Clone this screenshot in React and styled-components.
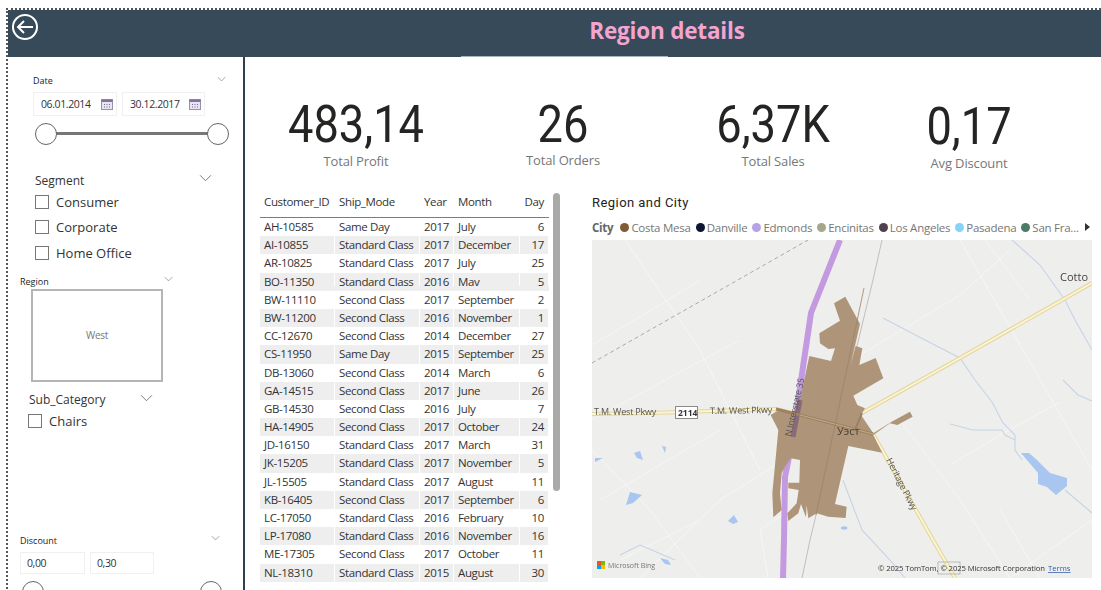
import React from "react";
import styled, { createGlobalStyle } from "styled-components";

const UI = '"Open Sans", "Noto Sans", sans-serif';
const DIN = 'Roboto, "Liberation Sans", sans-serif';

const Global = createGlobalStyle`
  html, body { margin: 0; padding: 0; background: #fff; height: 590px; overflow: hidden; }
  #root { height: 590px; }
`;

const Frame = styled.div`
  margin: 8px 0 0 6px;
  height: 582px;
  border-top: 2px dotted #555;
  border-left: 2px dotted #555;
  display: flex;
  flex-direction: column;
  font-family: ${UI};
  overflow: hidden;
`;
const Header = styled.header`
  position: relative;
  flex: 0 0 47px;
  background: #364a59;
  display: flex;
  align-items: center;
  justify-content: center;
  &::after {
    content: "";
    position: absolute;
    left: 453px;
    bottom: 0;
    width: 207px;
    height: 1px;
    background: #a9b3ba;
  }
`;
const BackIcon = styled.svg`
  position: absolute;
  left: 3px;
  top: 3px;
  width: 28px;
  height: 28px;
`;
const Title = styled.h1`
  margin: 0 0 4px 225px;
  font: 700 22.5px/1 ${UI};
  letter-spacing: -0.2px;
  color: #f3a5cf;
`;
const Body = styled.div`
  flex: 1;
  display: flex;
  min-height: 0;
`;
const Sidebar = styled.aside`
  flex: 0 0 237px;
  height: 100%;
  box-sizing: border-box;
  border-right: 2px solid #2f4050;
  display: flex;
  flex-direction: column;
`;
const Slicer = styled.section`
  margin-top: ${(p) => p.$top}px;
  margin-left: ${(p) => p.$left}px;
  width: ${(p) => p.$width}px;
  flex: none;
`;
const SlicerHead = styled.div`
  display: flex;
  align-items: center;
  justify-content: space-between;
  height: ${(p) => (p.$big ? 18 : 13)}px;
  font-size: ${(p) => (p.$big ? 12 : 9)}px;
  color: ${(p) => (p.$big ? "#333" : "#222")};
`;
const Chevron = styled.svg`
  width: ${(p) => (p.$big ? 13 : 9)}px;
  height: ${(p) => (p.$big ? 8 : 6)}px;
  margin-top: -4px;
  flex: none;
`;
const Inputs = styled.div`
  display: flex;
  gap: 5px;
  margin-top: ${(p) => p.$top}px;
`;
const DateInput = styled.div`
  box-sizing: border-box;
  width: ${(p) => p.$width}px;
  height: ${(p) => p.$height}px;
  border: 1px solid #f0f0f0;
  padding: 0 3px 0 ${(p) => p.$pad}px;
  display: flex;
  align-items: center;
  justify-content: space-between;
  font-size: 10.5px;
  letter-spacing: -0.4px;
  color: #333;
`;
const Slider = styled.div`
  position: relative;
  height: 22px;
  margin-top: ${(p) => p.$top}px;
  margin-left: ${(p) => p.$left}px;
  width: ${(p) => p.$width}px;
  flex: none;
  &::before {
    content: "";
    position: absolute;
    left: 10px;
    right: 10px;
    top: 9px;
    height: 3px;
    background: #777;
  }
`;
const Thumb = styled.span`
  position: absolute;
  top: 0;
  ${(p) => p.$side}: 0;
  box-sizing: border-box;
  width: 22px;
  height: 22px;
  border-radius: 50%;
  border: 1.5px solid #666;
  background: #fff;
`;
const CheckRow = styled.label`
  display: flex;
  align-items: center;
  gap: 7px;
  height: ${(p) => p.$height || 25.5}px;
  margin-left: ${(p) => p.$indent || 0}px;
  font-size: 13px;
  color: #333;
`;
const CheckBox = styled.span`
  box-sizing: border-box;
  width: 14px;
  height: 14px;
  border: 1px solid #777;
  flex: none;
`;
const RegionBox = styled.div`
  box-sizing: border-box;
  margin: 1px 0 0 11px;
  width: 132px;
  height: 93px;
  border: 2px solid #b5b5b5;
  display: flex;
  align-items: center;
  justify-content: center;
  font-size: 10px;
  letter-spacing: -0.3px;
  color: #777;
`;
const Main = styled.main`
  flex: 1;
  min-width: 0;
  display: flex;
  flex-direction: column;
`;
const KpiRow = styled.div`
  flex: 0 0 136px;
  display: grid;
  grid-template-columns: 208px 206px 214px 178px;
  padding-left: 7px;
`;
const Kpi = styled.div`
  padding-top: ${(p) => p.$top}px;
  text-align: center;
`;
const KpiValue = styled.div`
  font: 400 52px/50px ${DIN};
  color: #252423;
  transform: scaleX(0.87);
`;
const KpiLabel = styled.div`
  margin-top: ${(p) => p.$gap}px;
  font-size: 13px;
  line-height: 18px;
  letter-spacing: -0.15px;
  color: #777;
`;
const Content = styled.div`
  flex: 1;
  display: flex;
  min-height: 0;
`;
const TableWrap = styled.div`
  margin-left: 15px;
  width: 289px;
  flex: none;
`;
const columns = "75px 85px 34px 66px 29px";
const HeadRow = styled.div`
  display: grid;
  grid-template-columns: ${columns};
  height: 18px;
  padding-bottom: 6px;
  align-items: end;
  border-bottom: 1px solid #c4548f;
  font-size: 11.5px;
  letter-spacing: -0.36px;
  line-height: 18px;
  color: #333;
`;
const Row = styled.div`
  display: grid;
  grid-template-columns: ${columns};
  height: 18.2px;
  overflow: hidden;
  background: ${(p) => (p.$striped ? "#eeeeee" : "#fff")};
  font-size: 11.5px;
  letter-spacing: -0.36px;
  line-height: 18.2px;
  color: #333;
`;
const Cell = styled.div`
  padding: 0 ${(p) => (p.$right ? 5 : 4)}px 0 4px;
  white-space: nowrap;
  text-align: ${(p) => (p.$right ? "right" : "left")};
  box-shadow: inset -1px 0 0 #fff;
  ${(p) => p.$clip && "height: 13px; overflow: hidden;"}
`;
const Scrollbar = styled.div`
  margin-left: 4px;
  width: 7px;
  height: 298px;
  border-radius: 3.5px;
  background: #a9a9a9;
  flex: none;
`;
const MapPanel = styled.div`
  margin-left: 32px;
  width: 500px;
  flex: none;
`;
const MapTitle = styled.h2`
  margin: 0;
  height: 19px;
  font: 400 13px/19px ${DIN};
  letter-spacing: 0.45px;
  color: #222;
`;
const Legend = styled.div`
  position: relative;
  height: 19px;
  margin-top: 6px;
  display: flex;
  align-items: center;
  font-size: 11.5px;
  letter-spacing: -0.25px;
  color: #777;
`;
const LegendTitle = styled.strong`
  font-weight: 700;
  color: #666;
  margin-right: 7px;
`;
const LegendItem = styled.span`
  display: flex;
  align-items: center;
  gap: 2px;
  margin-right: 5px;
  white-space: nowrap;
`;
const Dot = styled.i`
  width: 9px;
  height: 9px;
  border-radius: 50%;
  background: ${(p) => p.$color};
  flex: none;
`;
const LegendArrow = styled.span`
  position: absolute;
  right: 2px;
  top: 5px;
  border-left: 5px solid #333;
  border-top: 4px solid transparent;
  border-bottom: 4px solid transparent;
`;
const MapArea = styled.svg`
  display: block;
  margin-top: 3px;
  width: 500px;
  height: 338px;
`;

const rows = [
  ["AH-10585", "Same Day", 2017, "July", 6],
  ["AI-10855", "Standard Class", 2017, "December", 17],
  ["AR-10825", "Standard Class", 2017, "July", 25],
  ["BO-11350", "Standard Class", 2016, "May", 5],
  ["BW-11110", "Second Class", 2017, "September", 2],
  ["BW-11200", "Second Class", 2016, "November", 1],
  ["CC-12670", "Second Class", 2014, "December", 27],
  ["CS-11950", "Same Day", 2015, "September", 25],
  ["DB-13060", "Second Class", 2014, "March", 6],
  ["GA-14515", "Second Class", 2017, "June", 26],
  ["GB-14530", "Second Class", 2016, "July", 7],
  ["HA-14905", "Second Class", 2017, "October", 24],
  ["JD-16150", "Standard Class", 2017, "March", 31],
  ["JK-15205", "Standard Class", 2017, "November", 5],
  ["JL-15505", "Standard Class", 2017, "August", 11],
  ["KB-16405", "Second Class", 2017, "September", 6],
  ["LC-17050", "Standard Class", 2016, "February", 10],
  ["LP-17080", "Standard Class", 2016, "November", 16],
  ["ME-17305", "Second Class", 2017, "October", 11],
  ["NL-18310", "Standard Class", 2015, "August", 30],
];

const legend = [
  ["Costa Mesa", "#7f5a34"],
  ["Danville", "#0c1433"],
  ["Edmonds", "#b8a2e6"],
  ["Encinitas", "#a6a68c"],
  ["Los Angeles", "#4d4150"],
  ["Pasadena", "#86d3f7"],
  ["San Fra...", "#4d7a68"],
];

const Down = ({ big }) => (
  <Chevron $big={big} viewBox="0 0 12 7">
    <polyline points="1,1 6,6 11,1" fill="none" stroke="#777" strokeWidth="0.9" />
  </Chevron>
);

const Calendar = () => (
  <svg width="12" height="11" viewBox="0 0 12 11">
    <rect x="0.5" y="0.5" width="11" height="10" fill="#e8e4f0" stroke="#9a8fb0" />
    <rect x="0.5" y="0.5" width="11" height="2.5" fill="#8a6f9c" />
    <path d="M3 5h1v1H3zM5.5 5h1v1h-1zM8 5h1v1H8zM3 7.5h1v1H3zM5.5 7.5h1v1h-1zM8 7.5h1v1H8z" fill="#6d6a98" />
  </svg>
);

const Road = ({ d }) => (
  <g fill="none" strokeLinejoin="round">
    <path d={d} stroke="#e2d59f" strokeWidth="4" />
    <path d={d} stroke="#fdf5d2" strokeWidth="2" />
  </g>
);

const town =
  "402,70 436,50 480,132 452,255 467,198 487,205 478,255 527,234 550,295 460,347 472,375 495,385 483,405 520,460 575,425 630,395 638,410 592,435 570,430 520,465 547,518 445,498 405,672 440,680 437,714 385,710 350,700 325,715 320,675 318,712 303,672 295,700 265,723 262,700 290,670 296,630 265,625 265,608 298,608 300,540 272,535 255,560 245,580 240,640 245,690 220,712 217,640 235,450 212,405 232,393 280,400 300,360 328,228 393,243 405,205 385,207 360,190 358,160 420,122";

const MapDrawing = () => (
  <MapArea viewBox="592 240 500 338">
    <defs>
      <filter id="soft" x="0" y="0" width="100%" height="100%">
        <feGaussianBlur stdDeviation="0.35" />
      </filter>
    </defs>
    <g filter="url(#soft)">
      <rect x="592" y="240" width="500" height="338" fill="#eeeeec" />
      <g fill="none" stroke="#f6f6f5" strokeWidth="1">
        <path d="M592 345L660 305L700 280M625 240L700 350L760 470M592 420L680 372L740 340M640 578L720 500L800 450" />
        <path d="M860 355L960 295L1010 250M960 240L1020 345L1092 470M950 465L1000 435L1060 402M1010 578L1092 520M1010 578L960 500L900 420" />
        <path d="M700 578L650 510L592 450M600 500L660 465L720 430M1000 510L1040 578M985 240L1030 300" />
        <path d="M768 578L760 530L790 510M620 560L700 520" />
      </g>
      <g fill="none" stroke="#c6d4e6" strokeWidth="1.1">
        <path d="M1012 240L1040 265L1065 300L1075 320L1092 350" />
        <path d="M883 318L925 340L960 358L975 380L992 402L1003 423L1015 435L1015 450L1022 460" />
        <path d="M950 424L973 430L1002 430L1005 435L1015 440" />
        <path d="M1065 490L1092 513M1063 380L1078 395L1092 401" />
        <path d="M843 480L862 530L890 560L905 578M620 555L640 545L675 560" />
      </g>
      <path d="M592 363L808 240" fill="none" stroke="#aaa" strokeWidth="1" strokeDasharray="4 3" />
      <path d="M882 240L873 280L810 540L802 578" fill="none" stroke="#c0bfbc" strokeWidth="1" />
      <g fill="#a9c6f0">
        <path d="M1021 453L1029 453L1037 460L1050 473L1067 478L1067 486L1056 495L1047 487L1038 484L1038 473Z" />
        <path d="M634 453L640 451L643 460L637 458Z" />
        <path d="M626 505L630 492L642 495L633 503Z" />
        <path d="M595 458L603 458L595 462Z" />
        <path d="M662 446L666 447L665 453Z" />
        <path d="M728 521L734 515L738 522L733 524Z" />
        <path d="M841 527l4-1 3 2-3 2-4-1z" />
        <path d="M660 558l8 2 3 5-6-1z" />
      </g>
      <Road d="M592 414L650 413L776 409L800 415" />
      <Road d="M862 413L960 358L1092 283" />
      <Road d="M873 434L933 540L955 578" />
      <path d="M840 240L811 313L803 367L793 437L785 477L784 540L783 578" fill="none" stroke="#c39ae0" strokeWidth="6" />
      <polygon points={town} fill="#ae9479" transform="translate(700 280) scale(0.3333)" />
      <path d="M800 400L793 437" fill="none" stroke="#8a6a78" strokeWidth="5" />
      <path d="M776 409L800 415L873 434" fill="none" stroke="#9c8262" strokeWidth="3" />
      <path d="M800 415L873 434" fill="none" stroke="#c2ad8a" strokeWidth="1" />
      <path d="M862 413L855 430" fill="none" stroke="#9c8262" strokeWidth="2" />
      <path d="M864 288L816 515" fill="none" stroke="#9c8468" strokeWidth="0.8" />
      <g fontFamily={UI} fill="#555">
        <text x="594" y="415" fontSize="9" letterSpacing="-0.2">T.M. West Pkwy</text>
        <text x="710" y="414" fontSize="9" letterSpacing="-0.2" transform="rotate(-1 710 414)">T.M. West Pkwy</text>
        <text x="0" y="0" fontSize="9" letterSpacing="-0.2" transform="translate(791 437) rotate(-77)">N Interstate 35</text>
        <text x="0" y="0" fontSize="9" letterSpacing="-0.2" transform="translate(886 460) rotate(63)">Heritage Pkwy</text>
        <text x="837" y="435" fontSize="11" fill="#4a4238">Уэст</text>
        <text x="1060" y="281" fontSize="11" fill="#444">Cotto</text>
      </g>
      <rect x="675.5" y="406.5" width="22" height="12" fill="#fff" stroke="#8a8a8a" strokeWidth="1" />
      <text x="678" y="415.5" fontFamily={UI} fontSize="8.5" fontWeight="700" fill="#333">2114</text>
      <rect x="597" y="561" width="4" height="4" fill="#f25022" />
      <rect x="601" y="561" width="4" height="4" fill="#7fba00" />
      <rect x="597" y="565" width="4" height="4" fill="#00a4ef" />
      <rect x="601" y="565" width="4" height="4" fill="#ffb900" />
      <text x="608" y="568" fontFamily={UI} fontSize="7" fill="#777">Microsoft Bing</text>
      <rect x="938" y="562" width="22" height="12" fill="none" stroke="#999" strokeWidth="0.6" />
      <text x="878" y="571" fontFamily={UI} fontSize="7.7" fill="#333" letterSpacing="-0.1">© 2025 TomTom, © 2025 Microsoft Corporation</text>
      <text x="1048" y="571" fontFamily={UI} fontSize="7.7" fill="#3560a8" textDecoration="underline">Terms</text>
    </g>
  </MapArea>
);

export default function App() {
  return (
    <>
      <Global />
      <Frame>
        <Header>
          <BackIcon viewBox="0 0 28 28">
            <circle cx="14" cy="14" r="12" fill="none" stroke="#fff" strokeWidth="2" />
            <path d="M22 14H7M13 8l-6 6 6 6" fill="none" stroke="#fff" strokeWidth="2" />
          </BackIcon>
          <Title>Region details</Title>
        </Header>
        <Body>
          <Sidebar>
            <Slicer $top={17} $left={25} $width={193}>
              <SlicerHead>Date<Down /></SlicerHead>
              <Inputs $top={5}>
                <DateInput $width={84} $height={24} $pad={7}>06.01.2014<Calendar /></DateInput>
                <DateInput $width={83} $height={24} $pad={7}>30.12.2017<Calendar /></DateInput>
              </Inputs>
            </Slicer>
            <Slider $top={7} $left={27} $width={194}>
              <Thumb $side="left" />
              <Thumb $side="right" />
            </Slider>
            <Slicer $top={26} $left={27} $width={177}>
              <SlicerHead $big>Segment<Down big /></SlicerHead>
              <CheckRow><CheckBox />Consumer</CheckRow>
              <CheckRow><CheckBox />Corporate</CheckRow>
              <CheckRow><CheckBox />Home Office</CheckRow>
            </Slicer>
            <Slicer $top={9} $left={12} $width={153}>
              <SlicerHead>Region<Down /></SlicerHead>
              <RegionBox>West</RegionBox>
            </Slicer>
            <Slicer $top={9} $left={21} $width={124}>
              <SlicerHead $big>Sub_Category<Down big /></SlicerHead>
              <CheckRow $height={24} $indent={-1}><CheckBox />Chairs</CheckRow>
            </Slicer>
            <Slicer $top={101} $left={12} $width={200}>
              <SlicerHead>Discount<Down /></SlicerHead>
              <Inputs $top={5}>
                <DateInput $width={65} $height={22} $pad={6}>0,00</DateInput>
                <DateInput $width={64} $height={22} $pad={6}>0,30</DateInput>
              </Inputs>
            </Slicer>
            <Slider $top={7} $left={14} $width={200}>
              <Thumb $side="left" />
              <Thumb $side="right" />
            </Slider>
          </Sidebar>
          <Main>
            <KpiRow>
              <Kpi $top={43}>
                <KpiValue>483,14</KpiValue>
                <KpiLabel $gap={2}>Total Profit</KpiLabel>
              </Kpi>
              <Kpi $top={43}>
                <KpiValue>26</KpiValue>
                <KpiLabel $gap={1}>Total Orders</KpiLabel>
              </Kpi>
              <Kpi $top={43}>
                <KpiValue>6,37K</KpiValue>
                <KpiLabel $gap={2}>Total Sales</KpiLabel>
              </Kpi>
              <Kpi $top={45}>
                <KpiValue>0,17</KpiValue>
                <KpiLabel $gap={2}>Avg Discount</KpiLabel>
              </Kpi>
            </KpiRow>
            <Content>
              <TableWrap>
                <HeadRow>
                  <Cell>Customer_ID</Cell>
                  <Cell>Ship_Mode</Cell>
                  <Cell>Year</Cell>
                  <Cell>Month</Cell>
                  <Cell $right>Day</Cell>
                </HeadRow>
                {rows.map((r, i) => (
                  <Row key={r[0]} $striped={i % 2 === 1}>
                    <Cell $clip={i === 3}>{r[0]}</Cell>
                    <Cell $clip={i === 3}>{r[1]}</Cell>
                    <Cell $clip={i === 3}>{r[2]}</Cell>
                    <Cell $clip={i === 3}>{r[3]}</Cell>
                    <Cell $clip={i === 3} $right>{r[4]}</Cell>
                  </Row>
                ))}
              </TableWrap>
              <Scrollbar />
              <MapPanel>
                <MapTitle>Region and City</MapTitle>
                <Legend>
                  <LegendTitle>City</LegendTitle>
                  {legend.map(([name, color]) => (
                    <LegendItem key={name}><Dot $color={color} />{name}</LegendItem>
                  ))}
                  <LegendArrow />
                </Legend>
                <MapDrawing />
              </MapPanel>
            </Content>
          </Main>
        </Body>
      </Frame>
    </>
  );
}
